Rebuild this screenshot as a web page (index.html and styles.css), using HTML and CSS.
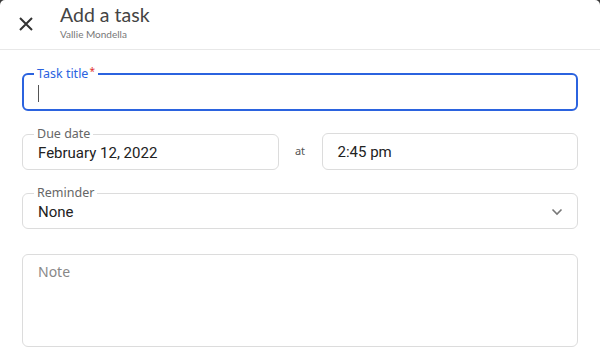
FILE: index.html
```html
<!DOCTYPE html>
<html lang="en">
<head>
  <meta charset="UTF-8">
  <meta name="viewport" content="width=device-width, initial-scale=1.0">
  <title>Add a task</title>
  <link rel="stylesheet" href="styles.css">
</head>
<body>
  <div class="dialog">
    <div class="header">
      <button class="close" aria-label="Close">
        <svg width="14" height="14" viewBox="0 0 14 14">
          <path d="M1 1 L13 13 M13 1 L1 13" stroke="#333" stroke-width="2" fill="none"/>
        </svg>
      </button>
      <div class="titles">
        <h1>Add a task</h1>
        <p>Vallie Mondella</p>
      </div>
    </div>

    <form class="form">
      <fieldset class="field focused">
        <legend>Task title<span class="req">*</span></legend>
        <div class="value"><span class="caret"></span></div>
      </fieldset>

      <div class="row">
        <fieldset class="field">
          <legend>Due date</legend>
          <div class="value">February 12, 2022</div>
        </fieldset>
        <span class="at">at</span>
        <div class="box">2:45 pm</div>
      </div>

      <fieldset class="field">
        <legend>Reminder</legend>
        <div class="value select">
          None
          <svg width="12" height="8" viewBox="0 0 12 8">
            <path d="M1.5 1.5 L6 6 L10.5 1.5" stroke="#777" stroke-width="1.6" fill="none"/>
          </svg>
        </div>
      </fieldset>

      <div class="note">Note</div>
    </form>
  </div>
</body>
</html>
```

FILE: styles.css
```css
html, body {
  margin: 0;
  height: 100%;
  overflow: hidden;
}
body {
  background-color: #3a3a3a;
  font-family: Roboto, "Liberation Sans", sans-serif;
}
.dialog {
  background-color: #fff;
  border-radius: 5px 5px 0 0;
  height: 100%;
}
.header {
  display: flex;
  align-items: flex-start;
  height: 50px;
  border-bottom: 1px solid #e8e8e8;
  box-sizing: border-box;
}
.close {
  width: 50px;
  height: 48px;
  border: none;
  background: none;
  padding: 0 0 0 1px;
  display: flex;
  align-items: center;
  justify-content: center;
  cursor: pointer;
}
.titles {
  margin-left: 10px;
  padding-top: 3px;
}
.titles h1 {
  margin: 0;
  font-family: Lato, "Noto Sans", sans-serif;
  font-weight: 400;
  font-size: 19.5px;
  line-height: 24px;
  color: #444;
}
.titles p {
  margin: 0;
  font-family: Lato, "Noto Sans", sans-serif;
  font-size: 10px;
  line-height: 14px;
  color: #777;
}
.form {
  padding: 18px 22px 0;
  display: flex;
  flex-direction: column;
  gap: 17px;
}
.field {
  margin: 0;
  padding: 0 14px 0 11px;
  border: 1px solid #dcdcdc;
  border-radius: 6px;
  min-width: 0;
}
.field legend {
  padding: 0 3px;
  font-family: "Noto Sans", Lato, sans-serif;
  font-size: 12.5px;
  line-height: 12px;
  color: #666;
}
.field .value {
  height: 25px;
  padding: 0 0 4px 4px;
  display: flex;
  align-items: center;
  font-size: 15px;
  color: #222;
}
.field.focused {
  border: 2px solid #2b63df;
  padding: 0 13px 0 10px;
}
.field.focused legend {
  color: #2b63df;
}
.field.focused .value {
  height: 26px;
  padding-bottom: 3px;
}
.req {
  color: #e0322d;
  font-size: 10px;
  line-height: 0;
  vertical-align: 3px;
  margin-left: 1px;
}
.caret {
  width: 1px;
  height: 17px;
  background-color: #555;
}
.row {
  display: grid;
  grid-template-columns: 1fr 43px 1fr;
  align-items: end;
}
.at {
  text-align: center;
  font-family: "Noto Sans", Lato, sans-serif;
  font-size: 11px;
  color: #555;
  padding-bottom: 12px;
}
.box {
  height: 37px;
  box-sizing: border-box;
  border: 1px solid #dcdcdc;
  border-radius: 6px;
  padding: 0 15px;
  display: flex;
  align-items: center;
  font-size: 15px;
  color: #222;
}
.select {
  justify-content: space-between;
}
.note {
  margin-top: 8px;
  height: 93px;
  box-sizing: border-box;
  border: 1px solid #dcdcdc;
  border-radius: 6px;
  padding: 7px 15px;
  font-family: "Noto Sans", Lato, sans-serif;
  font-size: 14px;
  color: #888;
}
```
